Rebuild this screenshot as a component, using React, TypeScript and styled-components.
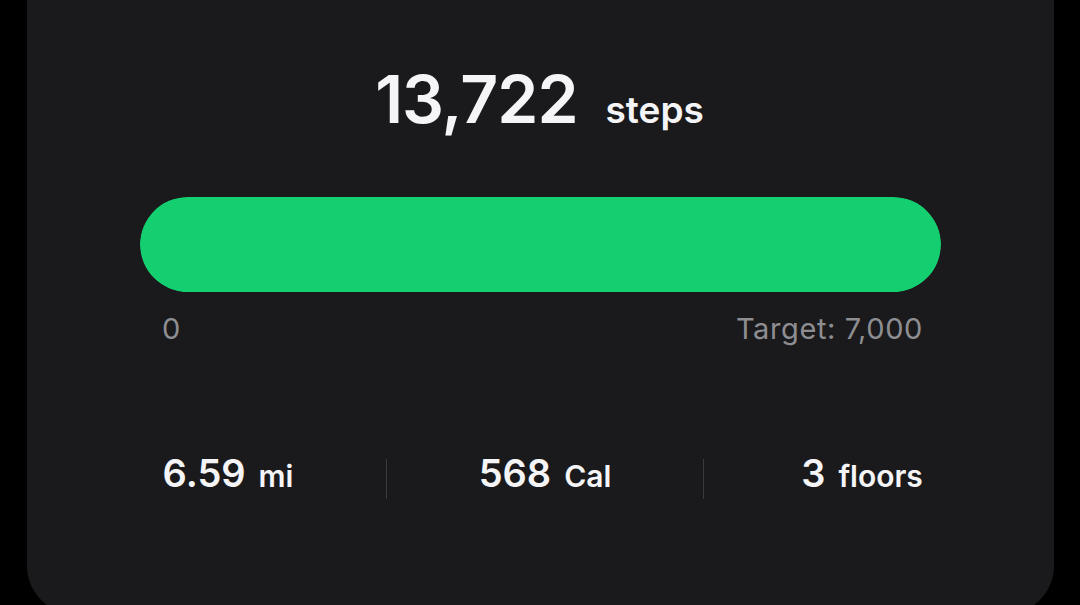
import { Fragment } from "react";
import styled, { createGlobalStyle } from "styled-components";

const GlobalStyle = createGlobalStyle`
  html, body {
    margin: 0;
    padding: 0;
    background: #000;
    overflow: hidden;
  }
  body {
    font-family: Inter, "Noto Sans", "Liberation Sans", sans-serif;
    color: #f5f5f7;
  }
`;

const Screen = styled.div`
  width: 1080px;
  height: 605px;
  overflow: hidden;
`;

const Card = styled.section`
  margin: -60px 26px 0 27px;
  height: 674px;
  box-sizing: border-box;
  padding-top: 119px;
  background: #1a1a1c;
  border-radius: 48px;
  display: flex;
  flex-direction: column;
`;

const Headline = styled.div`
  display: flex;
  justify-content: center;
  align-items: baseline;
  gap: 28px;
  padding-right: 2px;
`;

const BigNumber = styled.span`
  font-size: 66px;
  font-weight: 600;
  line-height: 80px;
  letter-spacing: -1px;
`;

const BigUnit = styled.span`
  font-size: 37px;
  font-weight: 600;
  line-height: 44px;
`;

const Progress = styled.div`
  margin: 58px 113px 0 113px;
  height: 95px;
  border-radius: 48px;
  background: #2a2a2c;
  overflow: hidden;
`;

const Fill = styled.div`
  height: 100%;
  border-radius: 48px;
  background: #13cf6f;
`;

const Scale = styled.div`
  display: flex;
  justify-content: space-between;
  margin: 20px 131px 0 135px;
  font-size: 29px;
  line-height: 34px;
  letter-spacing: 0.6px;
  color: #8e8e92;
`;

const Stats = styled.div`
  display: grid;
  grid-template-columns: 1fr 1px 1fr 1px 1fr;
  align-items: center;
  margin: 104px 34px 0 43px;
`;

const Stat = styled.div`
  display: flex;
  justify-content: center;
  align-items: baseline;
  gap: 13px;
  line-height: 46px;
  margin-bottom: 8px;
`;

const StatValue = styled.span`
  font-size: 38px;
  font-weight: 600;
`;

const StatUnit = styled.span`
  font-size: 30px;
  font-weight: 600;
`;

const Divider = styled.div`
  width: 1px;
  height: 40px;
  background: #3a3a3d;
`;

const steps = 13722;
const target = 7000;

const stats = [
  { value: "6.59", unit: "mi" },
  { value: "568", unit: "Cal" },
  { value: "3", unit: "floors" },
];

export default function App() {
  const pct = Math.min(100, (steps / target) * 100);
  return (
    <Screen>
      <GlobalStyle />
      <Card>
        <Headline>
          <BigNumber>{steps.toLocaleString("en-US")}</BigNumber>
          <BigUnit>steps</BigUnit>
        </Headline>
        <Progress>
          <Fill style={{ width: `${pct}%` }} />
        </Progress>
        <Scale>
          <span>0</span>
          <span>Target: {target.toLocaleString("en-US")}</span>
        </Scale>
        <Stats>
          {stats.map((s, i) => (
            <Fragment key={s.unit}>
              {i > 0 && <Divider />}
              <Stat>
                <StatValue>{s.value}</StatValue>
                <StatUnit>{s.unit}</StatUnit>
              </Stat>
            </Fragment>
          ))}
        </Stats>
      </Card>
    </Screen>
  );
}
